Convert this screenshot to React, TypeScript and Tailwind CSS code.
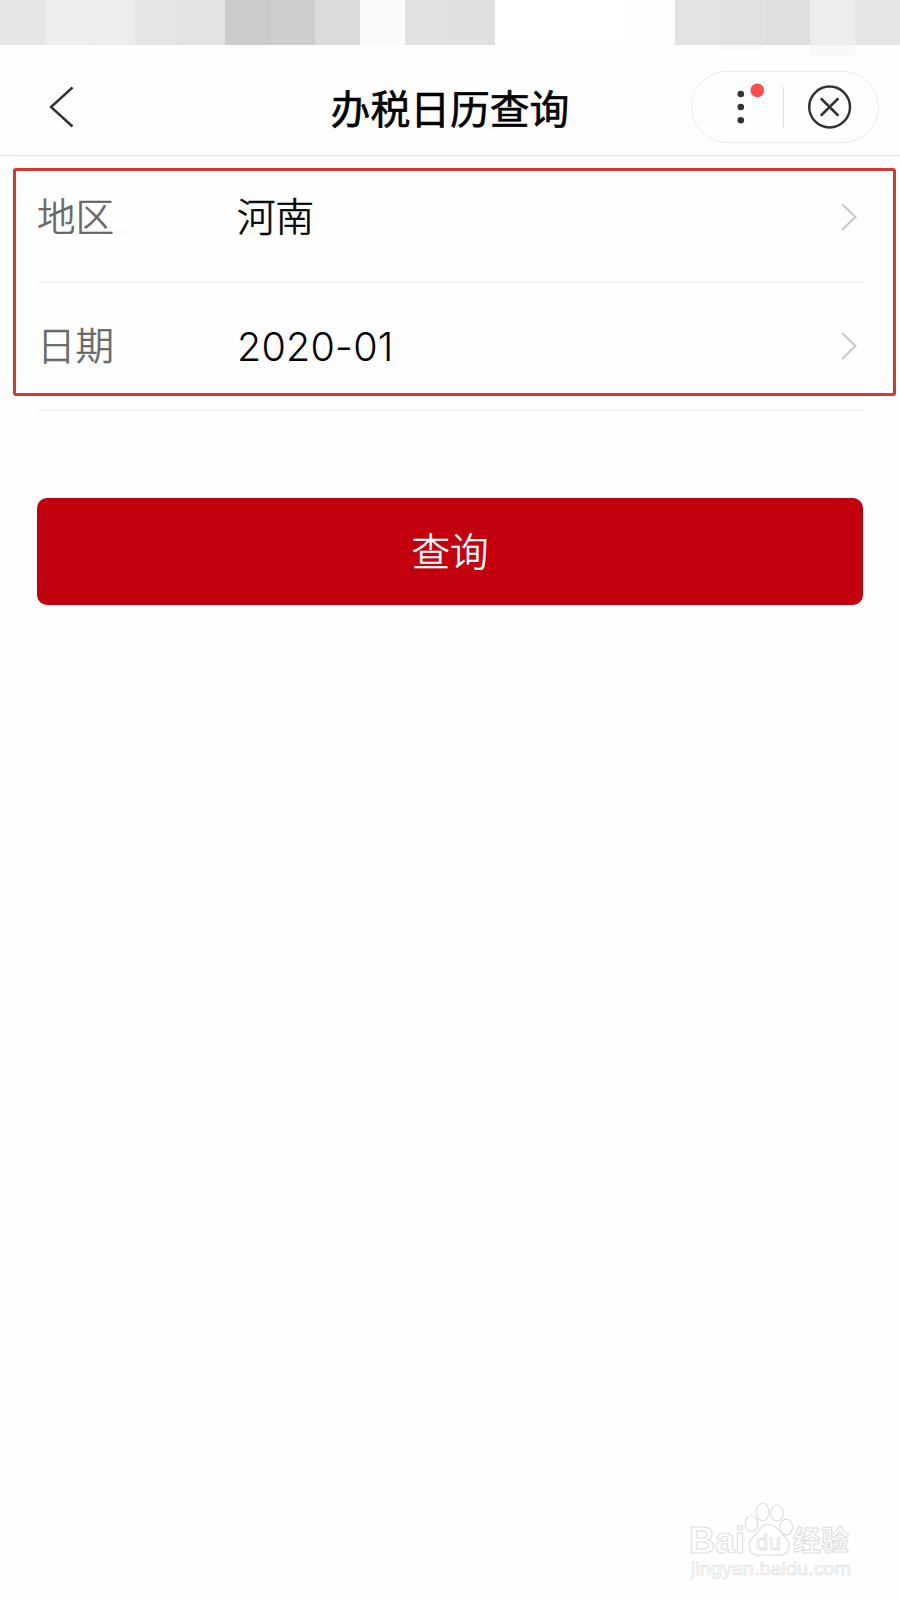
import { useState } from "react";

interface FieldRowProps {
    label: string;
    value: string;
    valueClassName?: string;
}

const statusTiles = [
    "bg-[#e6e6e6]",
    "bg-[#eeeeee]",
    "bg-[#ededed]",
    "bg-[#e5e5e5]",
    "bg-[#e3e3e3]",
    "bg-[#cbcbcb]",
    "bg-[#cdcdcd]",
    "bg-[#dbdbdb]",
    "bg-[#fafafa]",
    "bg-[#e1e1e1]",
    "bg-[#e0e0e0]",
    "bg-white",
    "bg-white",
    "bg-white",
    "bg-[#fdfdfd]",
    "bg-[#e3e3e3]",
    "bg-[#e2e1e1]",
    "bg-[#dfdfdf]",
    "bg-[#ededed]",
    "bg-[#e5e5e5]",
];

// faint spill below the status bar tiles
const spillTiles = [
    "col-start-2 h-[40px] bg-[#fdfdfd]",
    "col-start-17 h-[5px] bg-[#fdf7f7]",
    "col-start-19 h-[10px] bg-[#f8f8f8]",
];

const StatusBar = () => (
    <div className="h-[45px]">
        <div className="h-full grid grid-cols-20">
            {statusTiles.map((color, i) => (
                <div key={i} className={color} />
            ))}
        </div>
        <div className="grid grid-cols-20 items-start">
            {spillTiles.map((tile) => (
                <div key={tile} className={tile} />
            ))}
        </div>
    </div>
);

const Header = () => (
    <header className="relative h-[111px] pt-[13px] grid grid-cols-[1fr_auto_1fr] items-center border-b border-[#e4e4e4]">
        <button className="justify-self-start pl-12" aria-label="back">
            <svg width="28" height="44" viewBox="0 0 28 44" fill="none" stroke="#333" strokeWidth="2.4">
                <path d="M24.5 2.5L3 22L24.5 41.5" />
            </svg>
        </button>
        <h1 className="text-[39.8px] leading-[60px] font-normal text-black [-webkit-text-stroke:0.6px_#000]">
            办税日历查询
        </h1>
        <div className="justify-self-end mr-[21px] w-[188px] h-[72px] rounded-full border border-[#ebebeb]">
            <svg width="186" height="70" viewBox="0 0 186 70" fill="none">
                <g fill="#333">
                    <circle cx="48.8" cy="22" r="3.3" />
                    <circle cx="48.8" cy="35" r="3.3" />
                    <circle cx="48.8" cy="48.3" r="3.3" />
                </g>
                <circle cx="65.3" cy="18.4" r="6.8" fill="#fb4f4f" />
                <path d="M91.5 15V55" stroke="#dcdcdc" />
                <g stroke="#333" strokeWidth="2.5" strokeLinecap="round">
                    <circle cx="137.6" cy="35" r="20.4" />
                    <path d="M129.5 27L145.7 43M145.7 27L129.5 43" />
                </g>
            </svg>
        </div>
    </header>
);

const FieldRow = ({ label, value, valueClassName = "" }: FieldRowProps) => (
    <div className="h-[128.5px] flex items-center border-b-2 border-[#f4f4f4] text-[38.5px] leading-[56px]">
        <div className="w-[200px] pb-[6px] font-light text-[#666] [-webkit-text-stroke:0.6px_#666]">{label}</div>
        <div className={`flex-1 font-light text-black ${valueClassName}`}>{value}</div>
        <svg className="mr-[5px]" width="18" height="30" viewBox="0 0 18 30" fill="none" stroke="#c8c8c8" strokeWidth="2">
            <path d="M2 2L15.5 15L2 28" />
        </svg>
    </div>
);

const Watermark = () => (
    <svg width="190" height="100" viewBox="0 0 190 100" fill="#fff" strokeLinejoin="round">
        <g stroke="#e0e0e0" strokeWidth="1.1" fontWeight="700">
            <text
                x="9"
                y="63"
                fontSize="36"
                fontFamily="'Liberation Sans', sans-serif"
                textLength="56"
                lengthAdjust="spacingAndGlyphs"
            >
                Bai
            </text>
            <text x="113" y="61" fontSize="28" fontFamily="'Noto Sans CJK SC', sans-serif" textLength="56">
                经验
            </text>
        </g>
        <g stroke="#dfdfdf" strokeWidth="1.2">
            <ellipse cx="71.5" cy="33.5" rx="6.3" ry="8" />
            <ellipse cx="82.7" cy="22" rx="6.3" ry="8.6" />
            <ellipse cx="97" cy="23" rx="6.3" ry="8" />
            <ellipse cx="106.3" cy="37" rx="6.3" ry="7.8" />
            <path d="M88.5 34.5C96 34.5 98 40 103 45C109 50 110 55 108.5 59C106 67 98 65 89 65C80 65 72 67 69.5 59C68 54 69 50 75 45C80 40 81 34.5 88.5 34.5Z" />
        </g>
        <text
            x="76"
            y="60"
            fontSize="22"
            fontFamily="'Liberation Sans', sans-serif"
            textLength="25"
            stroke="#dfdfdf"
            strokeWidth="0.9"
        >
            du
        </text>
        <text
            x="11"
            y="85"
            fontSize="18.5"
            fontFamily="'Liberation Sans', sans-serif"
            textLength="160"
            lengthAdjust="spacingAndGlyphs"
            stroke="#e2e2e2"
            strokeWidth="0.7"
        >
            jingyan.baidu.com
        </text>
    </svg>
);

export default function App() {
    const [region] = useState("河南");
    const [month] = useState("2020-01");

    return (
        <div className="relative w-[900px] h-[1600px] flex flex-col overflow-hidden bg-[#fefefe] font-['Noto_Sans_CJK_SC',sans-serif]">
            <StatusBar />
            <Header />
            <main className="flex-1 -mt-[2px] px-[37px]">
                <FieldRow label="地区" value={region} valueClassName="pb-[6px] [-webkit-text-stroke:0.6px_#000]" />
                <FieldRow
                    label="日期"
                    value={month}
                    valueClassName="pt-[2px] text-[39.5px] tracking-[0.2px] font-['Inter','Noto_Sans_CJK_SC',sans-serif]"
                />
                <button className="mt-[87px] w-full h-[107px] pb-[3px] rounded-[10px] bg-[#c2000e] text-white text-[38.5px] font-light [-webkit-text-stroke:0.5px_#fff]">
                    查询
                </button>
            </main>
            <footer className="flex justify-end pr-[30px] pb-[10px]">
                <Watermark />
            </footer>
            <div className="absolute left-[13px] top-[168px] w-[883px] h-[228px] rounded-[3px] border-3 border-[#d33a35]" />
        </div>
    );
}
